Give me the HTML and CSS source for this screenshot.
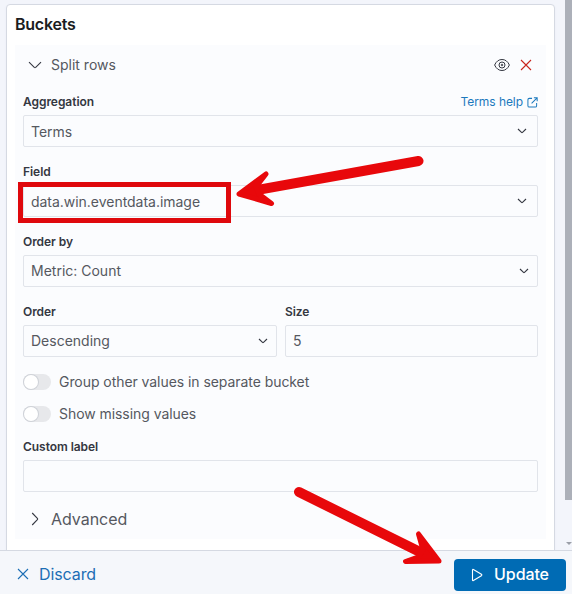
FILE: index.html
```html
<!DOCTYPE html>
<html lang="en">
<head>
<meta charset="utf-8">
<title>Buckets</title>
<link rel="stylesheet" href="styles.css">
</head>
<body>
<div class="app">
  <main class="viewport">
    <section class="panel">
      <h2 class="panel-title">Buckets</h2>
      <div class="bucket">
        <header class="bucket-head">
          <svg class="icon chevron" viewBox="0 0 14 14"><path d="M1 4.200l5.300 5.200q.7.600 1.400 0L13 4.200"/></svg>
          <span class="bucket-name">Split rows</span>
          <svg class="icon eye" viewBox="0 0 16 14"><path d="M.6 7C2.300 3.300 4.800 1.500 8 1.500S13.700 3.300 15.400 7C13.700 10.700 11.200 12.500 8 12.500S2.300 10.700.6 7z"/><circle cx="8" cy="7" r="3"/><circle cx="8" cy="7" r=".8"/></svg>
          <svg class="icon remove" viewBox="0 0 12 12"><path d="M1 1l10 10M11 1L1 11"/></svg>
        </header>
        <div class="field">
          <div class="label-row"><label>Aggregation</label>
            <a class="help">Terms help <svg class="icon popout" viewBox="0 0 12 12"><path d="M5.500 1.500H2.500Q1 1.500 1 3v6.500Q1 11 2.500 11H9q1.500 0 1.500-1.500V6.500M7.500.9H11.100V4.500M11 1L5 7"/></svg></a>
          </div>
          <div class="control"><span>Terms</span><svg class="icon caret" viewBox="0 0 10 10"><path d="M1 3l3.500 3.400q.5.400 1 0L9 3"/></svg></div>
        </div>
        <div class="field">
          <div class="label-row"><label>Field</label></div>
          <div class="control"><span class="value">data.win.eventdata.image</span><svg class="icon caret" viewBox="0 0 10 10"><path d="M1 3l3.500 3.400q.5.400 1 0L9 3"/></svg></div>
        </div>
        <div class="field">
          <div class="label-row"><label>Order by</label></div>
          <div class="control native"><span>Metric: Count</span><svg class="icon caret" viewBox="0 0 10 10"><path d="M1 3l3.500 3.400q.5.400 1 0L9 3"/></svg></div>
        </div>
        <div class="pair">
          <div class="field">
            <div class="label-row"><label>Order</label></div>
            <div class="control native"><span>Descending</span><svg class="icon caret" viewBox="0 0 10 10"><path d="M1 3l3.500 3.400q.5.400 1 0L9 3"/></svg></div>
          </div>
          <div class="field">
            <div class="label-row"><label>Size</label></div>
            <div class="control native"><span>5</span></div>
          </div>
        </div>
        <div class="switch-row"><span class="switch"></span><span class="switch-label">Group other values in separate bucket</span></div>
        <div class="switch-row"><span class="switch"></span><span class="switch-label">Show missing values</span></div>
        <div class="field custom">
          <div class="label-row"><label>Custom label</label></div>
          <div class="control"></div>
        </div>
        <div class="advanced"><svg class="icon chevron" viewBox="0 0 14 14"><path d="M4.200 1l5.200 5.300q.6.700 0 1.400L4.200 13"/></svg><span>Advanced</span></div>
      </div>
    </section>
    <div class="scrollbar"><div class="thumb"></div><div class="arrow-down"></div></div>
  </main>
  <footer class="actions">
    <a class="discard"><svg class="icon cross" viewBox="0 0 12 12"><path d="M1 1l10 10M11 1L1 11"/></svg><span>Discard</span></a>
    <button class="update"><svg class="icon play" viewBox="0 0 12 14"><path d="M1.500 2v10q0 1 .9.500l8-4.800q.9-.7 0-1.400l-8-4.800q-.9-.5-.9.500z"/></svg><span>Update</span></button>
  </footer>
  <div class="highlight"></div>
  <svg class="annotations" viewBox="0 0 572 594">
    <path class="shaft" d="M418.500 161L254 190.500"/>
    <path class="head" d="M239 194L266 174L256 187L259 194L271.500 203.500Z"/>
    <path class="shaft" d="M299 492L422 553"/>
    <path class="head" d="M439 561L418.500 534L423 550L418 557L405.500 561.500Z"/>
  </svg>
</div>
</body>
</html>
```
FILE: styles.css
```css
* { box-sizing: border-box; }
body { margin: 0; font-family: Inter, sans-serif; font-size: 14px; color: #55585f; background: #f4f6fa; }
.app { position: relative; width: 572px; height: 594px; overflow: hidden; display: flex; flex-direction: column; }
.viewport { height: 550px; display: flex; justify-content: space-between; padding: 4px 0 0 6px; overflow: hidden; background: #f3f5fb; }
.panel { width: 549px; height: 560px; padding: 0 8px; background: #fff; border: 1px solid #d5d9e2; border-radius: 4px; box-shadow: 0 1px 2px #d3dae655; }
.panel-title { margin: 0; height: 40px; line-height: 38px; font-size: 16px; font-weight: 600; letter-spacing: -.25px; color: #1a1c21; }
.bucket { height: 494px; padding: 0 8px; background: #fbfcfe; }
.bucket-head { height: 40px; display: flex; align-items: center; padding: 0 5px; }
.bucket-name { margin: -1px 0 0 9px; flex: 1; }
.icon { fill: none; stroke: currentColor; stroke-width: 1.1; flex: none; }
.chevron { width: 14px; height: 14px; color: #343741; }
.eye { width: 16px; height: 14px; color: #343741; stroke-width: 1; margin-right: 10px; }
.remove { width: 12px; height: 12px; color: #c9251d; margin-right: 1px; }
.field { height: 70px; padding-top: 7px; }
.label-row { height: 23px; display: flex; justify-content: space-between; align-items: center; padding-bottom: 5px; }
label { font-size: 12px; font-weight: 600; letter-spacing: -.05px; color: #343741; }
.help { display: flex; align-items: center; gap: 4px; font-size: 12px; letter-spacing: -.06px; color: #1c79bd; }
.popout { width: 11px; height: 11px; position: relative; top: 1px; }
.control { height: 32px; display: flex; justify-content: space-between; align-items: center; padding: 0 10px 0 7px; border: 1px solid #e1e4ea; border-radius: 2px; background: #fbfcfe; }
.control .value { letter-spacing: -.03px; }
.control .caret { width: 10px; height: 10px; color: #343741; }
.native { padding-right: 8px; }
.native span { margin-top: -1px; }
.pair { display: grid; grid-template-columns: 254px 253px; gap: 8px; }
.switch-row { height: 32px; display: flex; align-items: center; gap: 8px; padding-top: 2px; }
.switch-label { margin-top: -2px; letter-spacing: -.06px; }
.switch { width: 28px; height: 16px; border-radius: 8px; background: #e7e8eb; display: flex; align-items: center; }
.switch::before { content: ""; width: 14px; height: 14px; margin-left: 1px; border-radius: 50%; background: #fff; box-shadow: 0 0 0 1px #cfd2d8; }
.custom { padding-top: 8px; }
.advanced { display: flex; align-items: center; gap: 9px; padding-left: 5px; height: 40px; font-size: 16px; letter-spacing: -.04px; }
.scrollbar { width: 7px; height: 550px; margin-top: -4px; overflow: hidden; background: #f3f5fb; }
.thumb { width: 7px; height: 500px; background: #acb0b9; }
.arrow-down { margin: 42px 0 0 1px; width: 0; border: 3px solid transparent; border-top: 3px solid #9b9fa8; border-bottom: 0; }
.actions { height: 44px; display: flex; justify-content: space-between; align-items: center; padding: 5px 6px 0 17px; border-top: 1px solid #d5d9e2; background: #f5f7fb; }
.discard { display: flex; align-items: center; gap: 10px; font-size: 16px; letter-spacing: -.1px; color: #1c6eb5; margin-top: -2px; }
.cross { width: 12px; height: 12px; }
.update { width: 112px; height: 32px; padding: 0 0 1px; border: 0; border-radius: 4px; display: flex; align-items: center; justify-content: center; gap: 11px; font: 500 16px Inter, sans-serif; letter-spacing: -.1px; color: #fff; background: #006bb4; }
.update span { margin-top: -1px; }
.play { width: 12px; height: 14px; }
.highlight { position: absolute; left: 18px; top: 182px; width: 213px; height: 41px; border: 5px solid #df080c; }
.annotations { position: absolute; inset: 0; width: 572px; height: 594px; }
.shaft { fill: none; stroke: #e8080b; stroke-width: 10; stroke-linecap: round; }
.head { fill: #e8080b; stroke: #e8080b; stroke-width: 5; stroke-linejoin: round; }
```
